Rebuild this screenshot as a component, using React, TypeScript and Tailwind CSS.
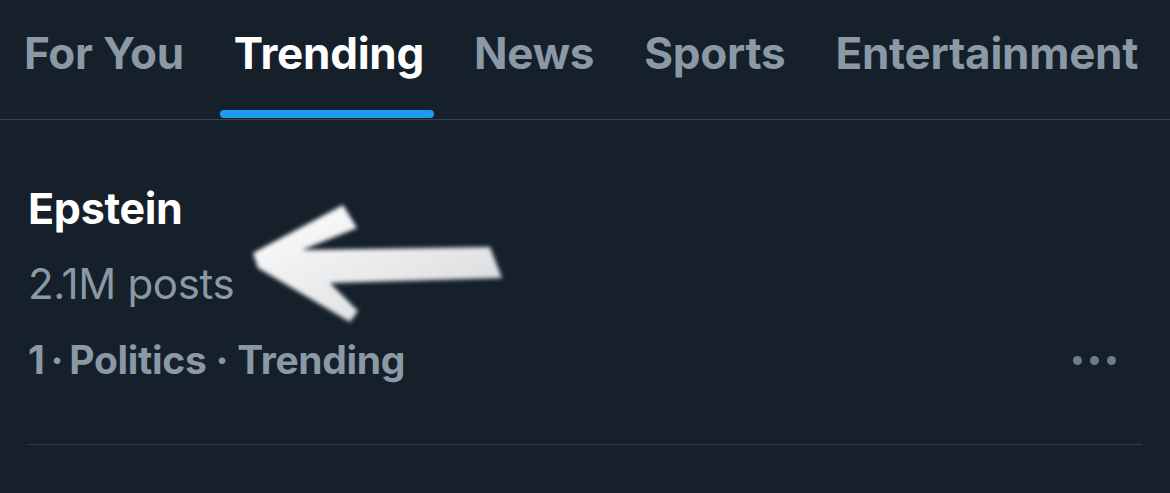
import React from 'react'

const tabs = ['For You', 'Trending', 'News', 'Sports', 'Entertainment']

function Arrow() {
  return (
    <svg
      className="absolute left-[240px] top-[195px]"
      width="280"
      height="140"
      viewBox="240 195 280 140"
    >
      <defs>
        <linearGradient id="ag" x1="0" y1="0" x2="1" y2="1">
          <stop offset="0" stopColor="#ffffff" />
          <stop offset="1" stopColor="#d4d6d9" />
        </linearGradient>
        <filter id="blur" x="-10%" y="-10%" width="120%" height="120%">
          <feGaussianBlur stdDeviation="2" />
        </filter>
      </defs>
      <polygon
        filter="url(#blur)"
        fill="url(#ag)"
        points="253,253 343,205 357,228 302,250 490,247 502,278 330,283 358,311 350,322 258,268"
      />
    </svg>
  )
}

export default function App() {
  return (
    <div
      className="relative w-[1170px] h-[493px] overflow-hidden bg-[#15202b]"
      style={{ fontFamily: 'Inter, "Liberation Sans", sans-serif' }}
    >
      {/* Tabs */}
      <div className="flex h-[120px] border-b border-[#38444d] pl-[24px] gap-[50px]">
        {tabs.map((t) => (
          <div key={t} className="relative flex flex-col justify-center">
            <span
              className={
                'text-[44px] font-bold tracking-[-0.25px] leading-none pb-[14px] ' +
                (t === 'Trending' ? 'text-white' : 'text-[#8b98a5]')
              }
            >
              {t}
            </span>
            {t === 'Trending' && (
              <div className="absolute bottom-[1px] left-[-14px] right-[-10px] h-[8px] rounded-full bg-[#1d9bf0]" />
            )}
          </div>
        ))}
      </div>

      {/* Trend item */}
      <div className="mx-[28px] border-b border-[#2f3b46] pt-[64px] pb-[60px] relative">
        <div className="text-[43px] font-bold leading-[48px] tracking-[-0.3px] text-white">Epstein</div>
        <div className="mt-[28px] text-[42px] leading-[48px] tracking-[-0.3px] text-[#8b98a5]">2.1M posts</div>
        <div className="mt-[28px] flex items-center justify-between">
          <div className="flex items-center text-[39px] font-bold leading-[48px] tracking-[-0.3px] text-[#8b98a5]">
            <span>1</span>
            <span className="mx-[6px]">·</span>
            <span>Politics</span>
            <span className="mx-[9px]">·</span>
            <span>Trending</span>
          </div>
          <div className="flex gap-[8px] mr-[26px]">
            <span className="w-[9px] h-[9px] rounded-full bg-[#6e7c89]" />
            <span className="w-[9px] h-[9px] rounded-full bg-[#6e7c89]" />
            <span className="w-[9px] h-[9px] rounded-full bg-[#6e7c89]" />
          </div>
        </div>
      </div>

      <Arrow />
    </div>
  )
}
